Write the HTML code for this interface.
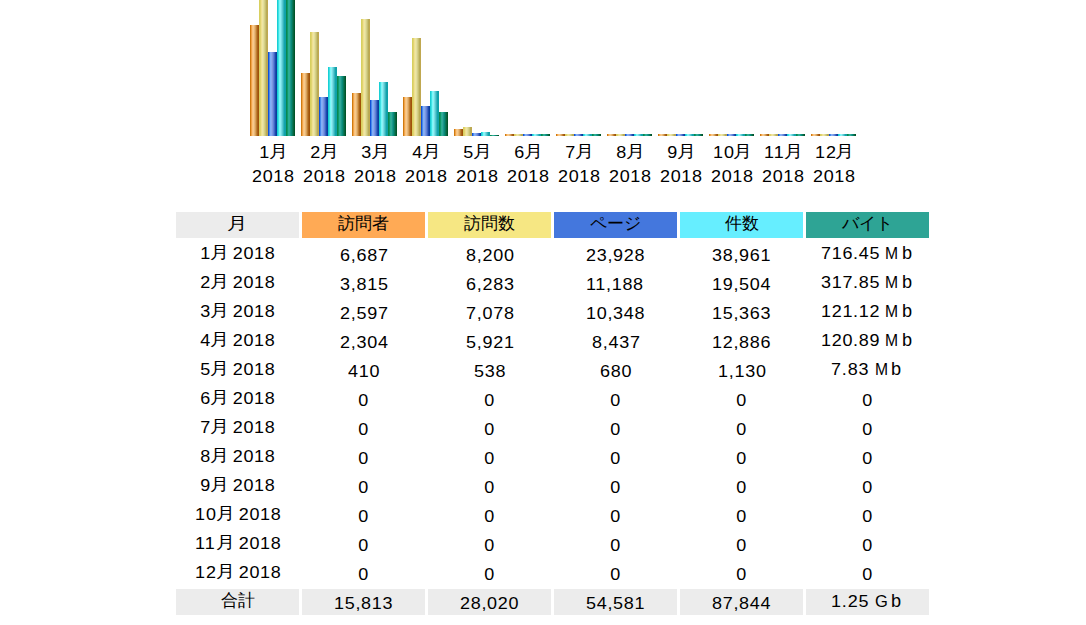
<!DOCTYPE html><html><head><meta charset="utf-8"><style>
html,body{margin:0;padding:0;background:#fff;}
body{width:1086px;height:625px;overflow:hidden;position:relative;font-family:"Liberation Sans",sans-serif;color:#000;font-size:16.5px;}
.b{position:absolute;width:9px;bottom:489px;}
.bu{background:linear-gradient(to right,#D07A10 0px 1px,#EFA34A 1px 2px,#FCC27C 2px 3px,#F6CA8C 3px 4px,#E8B87A 4px 5px,#D8A05A 5px 6px,#C08032 6px 7px,#A8601A 7px 8px,#A05208 8px 9px)}.bv{background:linear-gradient(to right,#D8D060 0px 1px,#E0D470 1px 2px,#F0E090 2px 3px,#EEE6A4 3px 4px,#E4DE9C 4px 5px,#D6D088 5px 6px,#C8C070 6px 7px,#B8AC58 7px 8px,#C0A850 8px 9px)}.bp{background:linear-gradient(to right,#1050D8 0px 1px,#4888EC 1px 2px,#80B0F8 2px 3px,#88A8F0 3px 4px,#7898E0 4px 5px,#6080D8 5px 6px,#4064C4 6px 7px,#1C48AC 7px 8px,#0A3C9C 8px 9px)}.bh{background:linear-gradient(to right,#18D0D4 0px 1px,#40E0E4 1px 2px,#78FAFA 2px 3px,#90F0F4 3px 4px,#78DCE4 4px 5px,#58C8D0 5px 6px,#34B4BC 6px 7px,#12A4AC 7px 8px,#10A0A8 8px 9px)}.bk{background:linear-gradient(to right,#088850 0px 1px,#109868 1px 2px,#28B090 2px 3px,#30A898 3px 4px,#1A988A 4px 5px,#088878 5px 6px,#087858 6px 7px,#066440 7px 8px,#025428 8px 9px)}
.lb{position:absolute;width:51px;text-align:center;line-height:24px;white-space:nowrap;}
.c{position:absolute;width:123px;height:26px;text-align:center;line-height:26px;white-space:nowrap;}
.g{background:#ECECEC}
.hu{background:#FFAA55}.hv{background:#F6E783}.hp{background:#4477DD}.hh{background:#66EEFF}.hk{background:#2EA495}
.r{display:inline-block;white-space:nowrap;text-align:left}
.s{display:inline-block;transform-origin:0 0;letter-spacing:0}
.o{position:relative}
.y{display:inline-block;transform:translateY(-1px) scaleX(1.12);transform-origin:10% 50%}
.yh{display:inline-block;transform:scaleX(1.2)}
.bb{display:inline-block;transform:scale(1.1,1.12);transform-origin:0 18.7px}
</style></head><body>
<div class="b bu" style="left:250px;height:111px"></div>
<div class="b bv" style="left:259px;height:137px"></div>
<div class="b bp" style="left:268px;height:84px"></div>
<div class="b bh" style="left:277px;height:137px"></div>
<div class="b bk" style="left:286px;height:137px"></div>
<div class="lb" style="left:247px;top:140px"><span class="r" style="width:10.49px"><span class="s" style="transform:scaleX(1.0900);letter-spacing:0.000px;padding-left:0.224px">1</span></span><span class="y">月</span><br><span class="r" style="width:41.96px"><span class="s" style="transform:scaleX(1.0900);letter-spacing:0.596px;padding-left:0.000px">2018</span></span></div>
<div class="b bu" style="left:301px;height:63px"></div>
<div class="b bv" style="left:310px;height:104px"></div>
<div class="b bp" style="left:319px;height:39px"></div>
<div class="b bh" style="left:328px;height:69px"></div>
<div class="b bk" style="left:337px;height:60px"></div>
<div class="lb" style="left:298px;top:140px"><span class="r" style="width:10.49px"><span class="s" style="transform:scaleX(1.0900);letter-spacing:0.000px;padding-left:0.224px">2</span></span><span class="y">月</span><br><span class="r" style="width:41.96px"><span class="s" style="transform:scaleX(1.0900);letter-spacing:0.596px;padding-left:0.000px">2018</span></span></div>
<div class="b bu" style="left:352px;height:43px"></div>
<div class="b bv" style="left:361px;height:117px"></div>
<div class="b bp" style="left:370px;height:36px"></div>
<div class="b bh" style="left:379px;height:54px"></div>
<div class="b bk" style="left:388px;height:24px"></div>
<div class="lb" style="left:349px;top:140px"><span class="r" style="width:10.49px"><span class="s" style="transform:scaleX(1.0900);letter-spacing:0.000px;padding-left:0.224px">3</span></span><span class="y">月</span><br><span class="r" style="width:41.96px"><span class="s" style="transform:scaleX(1.0900);letter-spacing:0.596px;padding-left:0.000px">2018</span></span></div>
<div class="b bu" style="left:403px;height:39px"></div>
<div class="b bv" style="left:412px;height:98px"></div>
<div class="b bp" style="left:421px;height:30px"></div>
<div class="b bh" style="left:430px;height:45px"></div>
<div class="b bk" style="left:439px;height:24px"></div>
<div class="lb" style="left:400px;top:140px"><span class="r" style="width:10.49px"><span class="s" style="transform:scaleX(1.0900);letter-spacing:0.000px;padding-left:0.224px">4</span></span><span class="y">月</span><br><span class="r" style="width:41.96px"><span class="s" style="transform:scaleX(1.0900);letter-spacing:0.596px;padding-left:0.000px">2018</span></span></div>
<div class="b bu" style="left:454px;height:7px"></div>
<div class="b bv" style="left:463px;height:9px"></div>
<div class="b bp" style="left:472px;height:3px"></div>
<div class="b bh" style="left:481px;height:4px"></div>
<div class="b bk" style="left:490px;height:1px"></div>
<div class="lb" style="left:451px;top:140px"><span class="r" style="width:10.49px"><span class="s" style="transform:scaleX(1.0900);letter-spacing:0.000px;padding-left:0.224px">5</span></span><span class="y">月</span><br><span class="r" style="width:41.96px"><span class="s" style="transform:scaleX(1.0900);letter-spacing:0.596px;padding-left:0.000px">2018</span></span></div>
<div class="b bu" style="left:505px;height:2px"></div>
<div class="b bv" style="left:514px;height:2px"></div>
<div class="b bp" style="left:523px;height:2px"></div>
<div class="b bh" style="left:532px;height:2px"></div>
<div class="b bk" style="left:541px;height:2px"></div>
<div class="lb" style="left:502px;top:140px"><span class="r" style="width:10.49px"><span class="s" style="transform:scaleX(1.0900);letter-spacing:0.000px;padding-left:0.224px">6</span></span><span class="y">月</span><br><span class="r" style="width:41.96px"><span class="s" style="transform:scaleX(1.0900);letter-spacing:0.596px;padding-left:0.000px">2018</span></span></div>
<div class="b bu" style="left:556px;height:2px"></div>
<div class="b bv" style="left:565px;height:2px"></div>
<div class="b bp" style="left:574px;height:2px"></div>
<div class="b bh" style="left:583px;height:2px"></div>
<div class="b bk" style="left:592px;height:2px"></div>
<div class="lb" style="left:553px;top:140px"><span class="r" style="width:10.49px"><span class="s" style="transform:scaleX(1.0900);letter-spacing:0.000px;padding-left:0.224px">7</span></span><span class="y">月</span><br><span class="r" style="width:41.96px"><span class="s" style="transform:scaleX(1.0900);letter-spacing:0.596px;padding-left:0.000px">2018</span></span></div>
<div class="b bu" style="left:607px;height:2px"></div>
<div class="b bv" style="left:616px;height:2px"></div>
<div class="b bp" style="left:625px;height:2px"></div>
<div class="b bh" style="left:634px;height:2px"></div>
<div class="b bk" style="left:643px;height:2px"></div>
<div class="lb" style="left:604px;top:140px"><span class="r" style="width:10.49px"><span class="s" style="transform:scaleX(1.0900);letter-spacing:0.000px;padding-left:0.224px">8</span></span><span class="y">月</span><br><span class="r" style="width:41.96px"><span class="s" style="transform:scaleX(1.0900);letter-spacing:0.596px;padding-left:0.000px">2018</span></span></div>
<div class="b bu" style="left:658px;height:2px"></div>
<div class="b bv" style="left:667px;height:2px"></div>
<div class="b bp" style="left:676px;height:2px"></div>
<div class="b bh" style="left:685px;height:2px"></div>
<div class="b bk" style="left:694px;height:2px"></div>
<div class="lb" style="left:655px;top:140px"><span class="r" style="width:10.49px"><span class="s" style="transform:scaleX(1.0900);letter-spacing:0.000px;padding-left:0.224px">9</span></span><span class="y">月</span><br><span class="r" style="width:41.96px"><span class="s" style="transform:scaleX(1.0900);letter-spacing:0.596px;padding-left:0.000px">2018</span></span></div>
<div class="b bu" style="left:709px;height:2px"></div>
<div class="b bv" style="left:718px;height:2px"></div>
<div class="b bp" style="left:727px;height:2px"></div>
<div class="b bh" style="left:736px;height:2px"></div>
<div class="b bk" style="left:745px;height:2px"></div>
<div class="lb" style="left:706px;top:140px"><span class="r" style="width:20.98px"><span class="s" style="transform:scaleX(1.0900);letter-spacing:0.894px;padding-left:0.000px">10</span></span><span class="y">月</span><br><span class="r" style="width:41.96px"><span class="s" style="transform:scaleX(1.0900);letter-spacing:0.596px;padding-left:0.000px">2018</span></span></div>
<div class="b bu" style="left:760px;height:2px"></div>
<div class="b bv" style="left:769px;height:2px"></div>
<div class="b bp" style="left:778px;height:2px"></div>
<div class="b bh" style="left:787px;height:2px"></div>
<div class="b bk" style="left:796px;height:2px"></div>
<div class="lb" style="left:757px;top:140px"><span class="r" style="width:20.98px"><span class="s" style="transform:scaleX(1.0900);letter-spacing:0.894px;padding-left:0.000px">11</span></span><span class="y">月</span><br><span class="r" style="width:41.96px"><span class="s" style="transform:scaleX(1.0900);letter-spacing:0.596px;padding-left:0.000px">2018</span></span></div>
<div class="b bu" style="left:811px;height:2px"></div>
<div class="b bv" style="left:820px;height:2px"></div>
<div class="b bp" style="left:829px;height:2px"></div>
<div class="b bh" style="left:838px;height:2px"></div>
<div class="b bk" style="left:847px;height:2px"></div>
<div class="lb" style="left:808px;top:140px"><span class="r" style="width:20.98px"><span class="s" style="transform:scaleX(1.0900);letter-spacing:0.894px;padding-left:0.000px">12</span></span><span class="y">月</span><br><span class="r" style="width:41.96px"><span class="s" style="transform:scaleX(1.0900);letter-spacing:0.596px;padding-left:0.000px">2018</span></span></div>
<div class="c g" style="left:176px;top:212px"><span class="o" style="top:-2px"><span class="j"><span class="yh">月</span></span></span></div>
<div class="c hu" style="left:302px;top:212px"><span class="o" style="top:-2px"><span class="j">訪問者</span></span></div>
<div class="c hv" style="left:428px;top:212px"><span class="o" style="top:-2px"><span class="j">訪問数</span></span></div>
<div class="c hp" style="left:554px;top:212px"><span class="o" style="top:-2px"><span class="j">ページ</span></span></div>
<div class="c hh" style="left:680px;top:212px"><span class="o" style="top:-2px"><span class="j">件数</span></span></div>
<div class="c hk" style="left:806px;top:212px"><span class="o" style="top:-2px"><span class="j">バイト</span></span></div>
<div class="c " style="left:176px;top:241px"><span class="o" style="top:-1px"><span class="r" style="width:10.49px"><span class="s" style="transform:scaleX(1.0900);letter-spacing:0.000px;padding-left:0.224px">1</span></span><span class="y">月</span><span class="r" style="width:47.76px"><span class="s" style="transform:scaleX(1.0900);letter-spacing:0.632px;padding-left:0.000px">&nbsp;2018</span></span></span></div>
<div class="c " style="left:302px;top:241px"><span class="o" style="top:1px"><span class="r" style="width:47.96px"><span class="s" style="transform:scaleX(1.0900);letter-spacing:0.678px;padding-left:0.000px">6,687</span></span></span></div>
<div class="c " style="left:428px;top:241px"><span class="o" style="top:1px"><span class="r" style="width:47.96px"><span class="s" style="transform:scaleX(1.0900);letter-spacing:0.678px;padding-left:0.000px">8,200</span></span></span></div>
<div class="c " style="left:554px;top:241px"><span class="o" style="top:1px"><span class="r" style="width:58.45px"><span class="s" style="transform:scaleX(1.0900);letter-spacing:0.632px;padding-left:0.000px">23,928</span></span></span></div>
<div class="c " style="left:680px;top:241px"><span class="o" style="top:1px"><span class="r" style="width:58.45px"><span class="s" style="transform:scaleX(1.0900);letter-spacing:0.632px;padding-left:0.000px">38,961</span></span></span></div>
<div class="c " style="left:806px;top:241px"><span class="o" style="top:-1px"><span class="r" style="width:58.45px"><span class="s" style="transform:scaleX(1.0900);letter-spacing:0.632px;padding-left:0.000px">716.45</span></span><span class="r" style="margin-left:6.0px;width:12.8px"><span class="s" style="transform:scaleX(0.95)">M</span></span><span class="r" style="margin-left:3.6px;width:10.3px;margin-right:2.0px"><span class="bb">b</span></span></span></div>
<div class="c " style="left:176px;top:270px"><span class="o" style="top:-1px"><span class="r" style="width:10.49px"><span class="s" style="transform:scaleX(1.0900);letter-spacing:0.000px;padding-left:0.224px">2</span></span><span class="y">月</span><span class="r" style="width:47.76px"><span class="s" style="transform:scaleX(1.0900);letter-spacing:0.632px;padding-left:0.000px">&nbsp;2018</span></span></span></div>
<div class="c " style="left:302px;top:270px"><span class="o" style="top:1px"><span class="r" style="width:47.96px"><span class="s" style="transform:scaleX(1.0900);letter-spacing:0.678px;padding-left:0.000px">3,815</span></span></span></div>
<div class="c " style="left:428px;top:270px"><span class="o" style="top:1px"><span class="r" style="width:47.96px"><span class="s" style="transform:scaleX(1.0900);letter-spacing:0.678px;padding-left:0.000px">6,283</span></span></span></div>
<div class="c " style="left:554px;top:270px"><span class="o" style="top:1px"><span class="r" style="width:58.45px"><span class="s" style="transform:scaleX(1.0900);letter-spacing:0.632px;padding-left:0.000px">11,188</span></span></span></div>
<div class="c " style="left:680px;top:270px"><span class="o" style="top:1px"><span class="r" style="width:58.45px"><span class="s" style="transform:scaleX(1.0900);letter-spacing:0.632px;padding-left:0.000px">19,504</span></span></span></div>
<div class="c " style="left:806px;top:270px"><span class="o" style="top:-1px"><span class="r" style="width:58.45px"><span class="s" style="transform:scaleX(1.0900);letter-spacing:0.632px;padding-left:0.000px">317.85</span></span><span class="r" style="margin-left:6.0px;width:12.8px"><span class="s" style="transform:scaleX(0.95)">M</span></span><span class="r" style="margin-left:3.6px;width:10.3px;margin-right:2.0px"><span class="bb">b</span></span></span></div>
<div class="c " style="left:176px;top:299px"><span class="o" style="top:-1px"><span class="r" style="width:10.49px"><span class="s" style="transform:scaleX(1.0900);letter-spacing:0.000px;padding-left:0.224px">3</span></span><span class="y">月</span><span class="r" style="width:47.76px"><span class="s" style="transform:scaleX(1.0900);letter-spacing:0.632px;padding-left:0.000px">&nbsp;2018</span></span></span></div>
<div class="c " style="left:302px;top:299px"><span class="o" style="top:1px"><span class="r" style="width:47.96px"><span class="s" style="transform:scaleX(1.0900);letter-spacing:0.678px;padding-left:0.000px">2,597</span></span></span></div>
<div class="c " style="left:428px;top:299px"><span class="o" style="top:1px"><span class="r" style="width:47.96px"><span class="s" style="transform:scaleX(1.0900);letter-spacing:0.678px;padding-left:0.000px">7,078</span></span></span></div>
<div class="c " style="left:554px;top:299px"><span class="o" style="top:1px"><span class="r" style="width:58.45px"><span class="s" style="transform:scaleX(1.0900);letter-spacing:0.632px;padding-left:0.000px">10,348</span></span></span></div>
<div class="c " style="left:680px;top:299px"><span class="o" style="top:1px"><span class="r" style="width:58.45px"><span class="s" style="transform:scaleX(1.0900);letter-spacing:0.632px;padding-left:0.000px">15,363</span></span></span></div>
<div class="c " style="left:806px;top:299px"><span class="o" style="top:-1px"><span class="r" style="width:58.45px"><span class="s" style="transform:scaleX(1.0900);letter-spacing:0.632px;padding-left:0.000px">121.12</span></span><span class="r" style="margin-left:6.0px;width:12.8px"><span class="s" style="transform:scaleX(0.95)">M</span></span><span class="r" style="margin-left:3.6px;width:10.3px;margin-right:2.0px"><span class="bb">b</span></span></span></div>
<div class="c " style="left:176px;top:328px"><span class="o" style="top:-1px"><span class="r" style="width:10.49px"><span class="s" style="transform:scaleX(1.0900);letter-spacing:0.000px;padding-left:0.224px">4</span></span><span class="y">月</span><span class="r" style="width:47.76px"><span class="s" style="transform:scaleX(1.0900);letter-spacing:0.632px;padding-left:0.000px">&nbsp;2018</span></span></span></div>
<div class="c " style="left:302px;top:328px"><span class="o" style="top:1px"><span class="r" style="width:47.96px"><span class="s" style="transform:scaleX(1.0900);letter-spacing:0.678px;padding-left:0.000px">2,304</span></span></span></div>
<div class="c " style="left:428px;top:328px"><span class="o" style="top:1px"><span class="r" style="width:47.96px"><span class="s" style="transform:scaleX(1.0900);letter-spacing:0.678px;padding-left:0.000px">5,921</span></span></span></div>
<div class="c " style="left:554px;top:328px"><span class="o" style="top:1px"><span class="r" style="width:47.96px"><span class="s" style="transform:scaleX(1.0900);letter-spacing:0.678px;padding-left:0.000px">8,437</span></span></span></div>
<div class="c " style="left:680px;top:328px"><span class="o" style="top:1px"><span class="r" style="width:58.45px"><span class="s" style="transform:scaleX(1.0900);letter-spacing:0.632px;padding-left:0.000px">12,886</span></span></span></div>
<div class="c " style="left:806px;top:328px"><span class="o" style="top:-1px"><span class="r" style="width:58.45px"><span class="s" style="transform:scaleX(1.0900);letter-spacing:0.632px;padding-left:0.000px">120.89</span></span><span class="r" style="margin-left:6.0px;width:12.8px"><span class="s" style="transform:scaleX(0.95)">M</span></span><span class="r" style="margin-left:3.6px;width:10.3px;margin-right:2.0px"><span class="bb">b</span></span></span></div>
<div class="c " style="left:176px;top:357px"><span class="o" style="top:-1px"><span class="r" style="width:10.49px"><span class="s" style="transform:scaleX(1.0900);letter-spacing:0.000px;padding-left:0.224px">5</span></span><span class="y">月</span><span class="r" style="width:47.76px"><span class="s" style="transform:scaleX(1.0900);letter-spacing:0.632px;padding-left:0.000px">&nbsp;2018</span></span></span></div>
<div class="c " style="left:302px;top:357px"><span class="o" style="top:1px"><span class="r" style="width:31.47px"><span class="s" style="transform:scaleX(1.0900);letter-spacing:0.671px;padding-left:0.000px">410</span></span></span></div>
<div class="c " style="left:428px;top:357px"><span class="o" style="top:1px"><span class="r" style="width:31.47px"><span class="s" style="transform:scaleX(1.0900);letter-spacing:0.671px;padding-left:0.000px">538</span></span></span></div>
<div class="c " style="left:554px;top:357px"><span class="o" style="top:1px"><span class="r" style="width:31.47px"><span class="s" style="transform:scaleX(1.0900);letter-spacing:0.671px;padding-left:0.000px">680</span></span></span></div>
<div class="c " style="left:680px;top:357px"><span class="o" style="top:1px"><span class="r" style="width:47.96px"><span class="s" style="transform:scaleX(1.0900);letter-spacing:0.678px;padding-left:0.000px">1,130</span></span></span></div>
<div class="c " style="left:806px;top:357px"><span class="o" style="top:-1px"><span class="r" style="width:37.47px"><span class="s" style="transform:scaleX(1.0900);letter-spacing:0.755px;padding-left:0.000px">7.83</span></span><span class="r" style="margin-left:6.0px;width:12.8px"><span class="s" style="transform:scaleX(0.95)">M</span></span><span class="r" style="margin-left:3.6px;width:10.3px;margin-right:2.0px"><span class="bb">b</span></span></span></div>
<div class="c " style="left:176px;top:386px"><span class="o" style="top:-1px"><span class="r" style="width:10.49px"><span class="s" style="transform:scaleX(1.0900);letter-spacing:0.000px;padding-left:0.224px">6</span></span><span class="y">月</span><span class="r" style="width:47.76px"><span class="s" style="transform:scaleX(1.0900);letter-spacing:0.632px;padding-left:0.000px">&nbsp;2018</span></span></span></div>
<div class="c " style="left:302px;top:386px"><span class="o" style="top:1px"><span class="r" style="width:10.49px"><span class="s" style="transform:scaleX(1.0900);letter-spacing:0.000px;padding-left:0.224px">0</span></span></span></div>
<div class="c " style="left:428px;top:386px"><span class="o" style="top:1px"><span class="r" style="width:10.49px"><span class="s" style="transform:scaleX(1.0900);letter-spacing:0.000px;padding-left:0.224px">0</span></span></span></div>
<div class="c " style="left:554px;top:386px"><span class="o" style="top:1px"><span class="r" style="width:10.49px"><span class="s" style="transform:scaleX(1.0900);letter-spacing:0.000px;padding-left:0.224px">0</span></span></span></div>
<div class="c " style="left:680px;top:386px"><span class="o" style="top:1px"><span class="r" style="width:10.49px"><span class="s" style="transform:scaleX(1.0900);letter-spacing:0.000px;padding-left:0.224px">0</span></span></span></div>
<div class="c " style="left:806px;top:386px"><span class="o" style="top:1px"><span class="r" style="width:10.49px"><span class="s" style="transform:scaleX(1.0900);letter-spacing:0.000px;padding-left:0.224px">0</span></span></span></div>
<div class="c " style="left:176px;top:415px"><span class="o" style="top:-1px"><span class="r" style="width:10.49px"><span class="s" style="transform:scaleX(1.0900);letter-spacing:0.000px;padding-left:0.224px">7</span></span><span class="y">月</span><span class="r" style="width:47.76px"><span class="s" style="transform:scaleX(1.0900);letter-spacing:0.632px;padding-left:0.000px">&nbsp;2018</span></span></span></div>
<div class="c " style="left:302px;top:415px"><span class="o" style="top:1px"><span class="r" style="width:10.49px"><span class="s" style="transform:scaleX(1.0900);letter-spacing:0.000px;padding-left:0.224px">0</span></span></span></div>
<div class="c " style="left:428px;top:415px"><span class="o" style="top:1px"><span class="r" style="width:10.49px"><span class="s" style="transform:scaleX(1.0900);letter-spacing:0.000px;padding-left:0.224px">0</span></span></span></div>
<div class="c " style="left:554px;top:415px"><span class="o" style="top:1px"><span class="r" style="width:10.49px"><span class="s" style="transform:scaleX(1.0900);letter-spacing:0.000px;padding-left:0.224px">0</span></span></span></div>
<div class="c " style="left:680px;top:415px"><span class="o" style="top:1px"><span class="r" style="width:10.49px"><span class="s" style="transform:scaleX(1.0900);letter-spacing:0.000px;padding-left:0.224px">0</span></span></span></div>
<div class="c " style="left:806px;top:415px"><span class="o" style="top:1px"><span class="r" style="width:10.49px"><span class="s" style="transform:scaleX(1.0900);letter-spacing:0.000px;padding-left:0.224px">0</span></span></span></div>
<div class="c " style="left:176px;top:444px"><span class="o" style="top:-1px"><span class="r" style="width:10.49px"><span class="s" style="transform:scaleX(1.0900);letter-spacing:0.000px;padding-left:0.224px">8</span></span><span class="y">月</span><span class="r" style="width:47.76px"><span class="s" style="transform:scaleX(1.0900);letter-spacing:0.632px;padding-left:0.000px">&nbsp;2018</span></span></span></div>
<div class="c " style="left:302px;top:444px"><span class="o" style="top:1px"><span class="r" style="width:10.49px"><span class="s" style="transform:scaleX(1.0900);letter-spacing:0.000px;padding-left:0.224px">0</span></span></span></div>
<div class="c " style="left:428px;top:444px"><span class="o" style="top:1px"><span class="r" style="width:10.49px"><span class="s" style="transform:scaleX(1.0900);letter-spacing:0.000px;padding-left:0.224px">0</span></span></span></div>
<div class="c " style="left:554px;top:444px"><span class="o" style="top:1px"><span class="r" style="width:10.49px"><span class="s" style="transform:scaleX(1.0900);letter-spacing:0.000px;padding-left:0.224px">0</span></span></span></div>
<div class="c " style="left:680px;top:444px"><span class="o" style="top:1px"><span class="r" style="width:10.49px"><span class="s" style="transform:scaleX(1.0900);letter-spacing:0.000px;padding-left:0.224px">0</span></span></span></div>
<div class="c " style="left:806px;top:444px"><span class="o" style="top:1px"><span class="r" style="width:10.49px"><span class="s" style="transform:scaleX(1.0900);letter-spacing:0.000px;padding-left:0.224px">0</span></span></span></div>
<div class="c " style="left:176px;top:473px"><span class="o" style="top:-1px"><span class="r" style="width:10.49px"><span class="s" style="transform:scaleX(1.0900);letter-spacing:0.000px;padding-left:0.224px">9</span></span><span class="y">月</span><span class="r" style="width:47.76px"><span class="s" style="transform:scaleX(1.0900);letter-spacing:0.632px;padding-left:0.000px">&nbsp;2018</span></span></span></div>
<div class="c " style="left:302px;top:473px"><span class="o" style="top:1px"><span class="r" style="width:10.49px"><span class="s" style="transform:scaleX(1.0900);letter-spacing:0.000px;padding-left:0.224px">0</span></span></span></div>
<div class="c " style="left:428px;top:473px"><span class="o" style="top:1px"><span class="r" style="width:10.49px"><span class="s" style="transform:scaleX(1.0900);letter-spacing:0.000px;padding-left:0.224px">0</span></span></span></div>
<div class="c " style="left:554px;top:473px"><span class="o" style="top:1px"><span class="r" style="width:10.49px"><span class="s" style="transform:scaleX(1.0900);letter-spacing:0.000px;padding-left:0.224px">0</span></span></span></div>
<div class="c " style="left:680px;top:473px"><span class="o" style="top:1px"><span class="r" style="width:10.49px"><span class="s" style="transform:scaleX(1.0900);letter-spacing:0.000px;padding-left:0.224px">0</span></span></span></div>
<div class="c " style="left:806px;top:473px"><span class="o" style="top:1px"><span class="r" style="width:10.49px"><span class="s" style="transform:scaleX(1.0900);letter-spacing:0.000px;padding-left:0.224px">0</span></span></span></div>
<div class="c " style="left:176px;top:502px"><span class="o" style="top:-1px"><span class="r" style="width:20.98px"><span class="s" style="transform:scaleX(1.0900);letter-spacing:0.894px;padding-left:0.000px">10</span></span><span class="y">月</span><span class="r" style="width:47.76px"><span class="s" style="transform:scaleX(1.0900);letter-spacing:0.632px;padding-left:0.000px">&nbsp;2018</span></span></span></div>
<div class="c " style="left:302px;top:502px"><span class="o" style="top:1px"><span class="r" style="width:10.49px"><span class="s" style="transform:scaleX(1.0900);letter-spacing:0.000px;padding-left:0.224px">0</span></span></span></div>
<div class="c " style="left:428px;top:502px"><span class="o" style="top:1px"><span class="r" style="width:10.49px"><span class="s" style="transform:scaleX(1.0900);letter-spacing:0.000px;padding-left:0.224px">0</span></span></span></div>
<div class="c " style="left:554px;top:502px"><span class="o" style="top:1px"><span class="r" style="width:10.49px"><span class="s" style="transform:scaleX(1.0900);letter-spacing:0.000px;padding-left:0.224px">0</span></span></span></div>
<div class="c " style="left:680px;top:502px"><span class="o" style="top:1px"><span class="r" style="width:10.49px"><span class="s" style="transform:scaleX(1.0900);letter-spacing:0.000px;padding-left:0.224px">0</span></span></span></div>
<div class="c " style="left:806px;top:502px"><span class="o" style="top:1px"><span class="r" style="width:10.49px"><span class="s" style="transform:scaleX(1.0900);letter-spacing:0.000px;padding-left:0.224px">0</span></span></span></div>
<div class="c " style="left:176px;top:531px"><span class="o" style="top:-1px"><span class="r" style="width:20.98px"><span class="s" style="transform:scaleX(1.0900);letter-spacing:0.894px;padding-left:0.000px">11</span></span><span class="y">月</span><span class="r" style="width:47.76px"><span class="s" style="transform:scaleX(1.0900);letter-spacing:0.632px;padding-left:0.000px">&nbsp;2018</span></span></span></div>
<div class="c " style="left:302px;top:531px"><span class="o" style="top:1px"><span class="r" style="width:10.49px"><span class="s" style="transform:scaleX(1.0900);letter-spacing:0.000px;padding-left:0.224px">0</span></span></span></div>
<div class="c " style="left:428px;top:531px"><span class="o" style="top:1px"><span class="r" style="width:10.49px"><span class="s" style="transform:scaleX(1.0900);letter-spacing:0.000px;padding-left:0.224px">0</span></span></span></div>
<div class="c " style="left:554px;top:531px"><span class="o" style="top:1px"><span class="r" style="width:10.49px"><span class="s" style="transform:scaleX(1.0900);letter-spacing:0.000px;padding-left:0.224px">0</span></span></span></div>
<div class="c " style="left:680px;top:531px"><span class="o" style="top:1px"><span class="r" style="width:10.49px"><span class="s" style="transform:scaleX(1.0900);letter-spacing:0.000px;padding-left:0.224px">0</span></span></span></div>
<div class="c " style="left:806px;top:531px"><span class="o" style="top:1px"><span class="r" style="width:10.49px"><span class="s" style="transform:scaleX(1.0900);letter-spacing:0.000px;padding-left:0.224px">0</span></span></span></div>
<div class="c " style="left:176px;top:560px"><span class="o" style="top:-1px"><span class="r" style="width:20.98px"><span class="s" style="transform:scaleX(1.0900);letter-spacing:0.894px;padding-left:0.000px">12</span></span><span class="y">月</span><span class="r" style="width:47.76px"><span class="s" style="transform:scaleX(1.0900);letter-spacing:0.632px;padding-left:0.000px">&nbsp;2018</span></span></span></div>
<div class="c " style="left:302px;top:560px"><span class="o" style="top:1px"><span class="r" style="width:10.49px"><span class="s" style="transform:scaleX(1.0900);letter-spacing:0.000px;padding-left:0.224px">0</span></span></span></div>
<div class="c " style="left:428px;top:560px"><span class="o" style="top:1px"><span class="r" style="width:10.49px"><span class="s" style="transform:scaleX(1.0900);letter-spacing:0.000px;padding-left:0.224px">0</span></span></span></div>
<div class="c " style="left:554px;top:560px"><span class="o" style="top:1px"><span class="r" style="width:10.49px"><span class="s" style="transform:scaleX(1.0900);letter-spacing:0.000px;padding-left:0.224px">0</span></span></span></div>
<div class="c " style="left:680px;top:560px"><span class="o" style="top:1px"><span class="r" style="width:10.49px"><span class="s" style="transform:scaleX(1.0900);letter-spacing:0.000px;padding-left:0.224px">0</span></span></span></div>
<div class="c " style="left:806px;top:560px"><span class="o" style="top:1px"><span class="r" style="width:10.49px"><span class="s" style="transform:scaleX(1.0900);letter-spacing:0.000px;padding-left:0.224px">0</span></span></span></div>
<div class="c g" style="left:176px;top:589px"><span class="o" style="top:-2px"><span class="j">合計</span></span></div>
<div class="c g" style="left:302px;top:589px"><span class="o" style="top:1px"><span class="r" style="width:58.45px"><span class="s" style="transform:scaleX(1.0900);letter-spacing:0.632px;padding-left:0.000px">15,813</span></span></span></div>
<div class="c g" style="left:428px;top:589px"><span class="o" style="top:1px"><span class="r" style="width:58.45px"><span class="s" style="transform:scaleX(1.0900);letter-spacing:0.632px;padding-left:0.000px">28,020</span></span></span></div>
<div class="c g" style="left:554px;top:589px"><span class="o" style="top:1px"><span class="r" style="width:58.45px"><span class="s" style="transform:scaleX(1.0900);letter-spacing:0.632px;padding-left:0.000px">54,581</span></span></span></div>
<div class="c g" style="left:680px;top:589px"><span class="o" style="top:1px"><span class="r" style="width:58.45px"><span class="s" style="transform:scaleX(1.0900);letter-spacing:0.632px;padding-left:0.000px">87,844</span></span></span></div>
<div class="c g" style="left:806px;top:589px"><span class="o" style="top:-1px"><span class="r" style="width:37.47px"><span class="s" style="transform:scaleX(1.0900);letter-spacing:0.755px;padding-left:0.000px">1.25</span></span><span class="r" style="margin-left:6.0px;width:12.83px"><span class="s" style="transform:scaleX(1.0)">G</span></span><span class="r" style="margin-left:3.6px;width:10.3px;margin-right:2.0px"><span class="bb">b</span></span></span></div>
</body></html>
